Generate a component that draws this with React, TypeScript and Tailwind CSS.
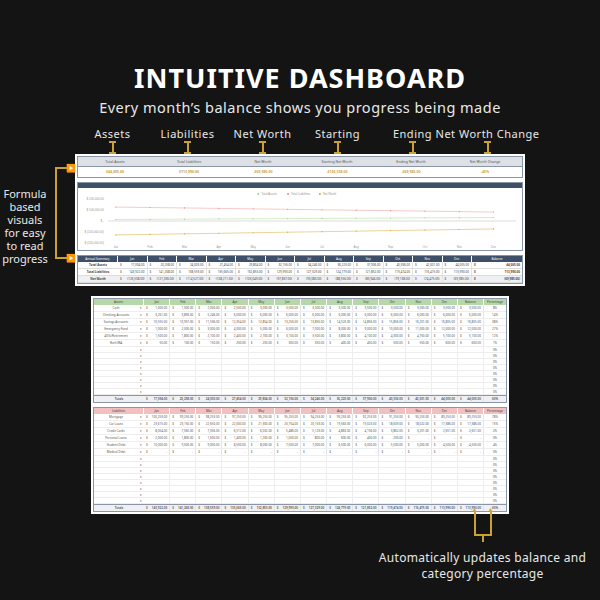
import React from 'react'

const months = ['Jan', 'Feb', 'Mar', 'Apr', 'May', 'Jun', 'Jul', 'Aug', 'Sep', 'Oct', 'Nov', 'Dec']

const assets: [string, string[], string, string][] = [
  ['Cash', ['1,000.00', '1,500.00', '2,000.00', '2,500.00', '3,000.00', '3,500.00', '3,500.00', '3,500.00', '3,500.00', '3,500.00', '3,500.00', '3,500.00'], '3,500.00', '8%'],
  ['Checking Accounts', ['3,261.00', '3,893.00', '5,246.00', '6,000.00', '6,000.00', '6,000.00', '6,000.00', '6,000.00', '6,000.00', '6,000.00', '6,000.00', '6,000.00'], '6,000.00', '14%'],
  ['Savings Accounts', ['10,555.00', '10,957.00', '11,536.00', '12,354.00', '12,854.00', '13,256.00', '13,856.00', '14,523.00', '14,856.00', '15,856.00', '16,201.00', '16,805.00'], '16,805.00', '38%'],
  ['Emergency Fund', ['1,000.00', '2,000.00', '3,000.00', '4,000.00', '5,000.00', '6,000.00', '7,000.00', '8,000.00', '9,000.00', '10,000.00', '11,000.00', '12,000.00'], '12,000.00', '27%'],
  ['401k/Retirement', ['1,500.00', '1,800.00', '2,100.00', '2,400.00', '2,700.00', '3,100.00', '3,500.00', '3,800.00', '4,100.00', '4,300.00', '4,750.00', '5,100.00'], '5,100.00', '12%'],
  ['Roth IRA', ['50.00', '100.00', '150.00', '200.00', '250.00', '300.00', '350.00', '400.00', '450.00', '500.00', '550.00', '600.00'], '600.00', '1%'],
]
const assetTotals = ['17,094.00', '20,258.00', '24,003.00', '27,454.00', '29,804.00', '32,156.00', '34,246.00', '36,223.00', '37,906.00', '40,336.00', '42,001.00', '44,005.00']

const liabilities: [string, string[], string, string][] = [
  ['Mortgage', ['100,253.00', '99,253.00', '98,253.00', '97,253.00', '96,253.00', '95,253.00', '94,253.00', '93,253.00', '92,253.00', '91,253.00', '90,253.00', '89,253.00'], '89,253.00', '78%'],
  ['Car Loans', ['23,615.00', '23,150.00', '22,650.00', '22,000.00', '21,300.00', '20,754.00', '20,153.00', '19,563.00', '19,023.00', '18,609.00', '18,022.00', '17,386.00'], '17,386.00', '15%'],
  ['Credit Cards', ['8,054.00', '7,565.00', '7,056.00', '6,512.00', '6,032.00', '5,486.00', '5,123.00', '4,863.00', '4,156.00', '3,862.00', '3,201.00', '2,651.00'], '2,651.00', '2%'],
  ['Personal Loans', ['2,000.00', '1,800.00', '1,600.00', '1,400.00', '1,200.00', '1,000.00', '800.00', '600.00', '400.00', '200.00', '-', '-'], '-', '0%'],
  ['Student Debt', ['10,000.00', '9,500.00', '9,000.00', '8,500.00', '8,000.00', '7,500.00', '7,000.00', '6,500.00', '6,000.00', '5,500.00', '5,000.00', '4,500.00'], '4,500.00', '4%'],
  ['Medical Debt', ['-', '-', '-', '-', '-', '-', '-', '-', '-', '-', '-', '-'], '-', '0%'],
]
const liabTotals = ['143,922.00', '141,268.00', '138,559.00', '135,665.00', '132,853.00', '129,993.00', '127,329.00', '124,779.00', '121,852.00', '119,474.00', '116,475.00', '113,990.00']

const summaryRows: [string, string[], string][] = [
  ['Total Assets', assetTotals, '44,005.00'],
  ['Total Liabilities', liabTotals, '113,990.00'],
  ['Net Worth', ['(126,538.00)', '(121,036.00)', '(114,527.00)', '(108,211.00)', '(103,049.00)', '(97,837.00)', '(93,083.00)', '(88,556.00)', '(83,946.00)', '(79,138.00)', '(74,475.00)', '(69,985.00)'], '(69,985.00)'],
]

const tableCols = 'grid grid-cols-[44px_6px_repeat(12,1fr)_26px_22px]'
const summaryCols = 'grid grid-cols-[40px_repeat(12,1fr)_50px]'

function Money({ v }: { v: string }) {
  return (
    <div className="flex justify-between px-[2px] border-r border-[#e3e3e3]">
      <span>$</span>
      <span>{v}</span>
    </div>
  )
}

function Table({ title, head, rows, totals, totalBal }: { title: string; head: string; rows: [string, string[], string, string][]; totals: string[]; totalBal: string }) {
  const blanks = Array.from({ length: 8 })
  return (
    <div className="border border-[#8a96a8] text-[3px] leading-[6px] text-[#555]">
      <div className={`${tableCols} ${head} text-center text-[#444]`}>
        <div className="col-span-2 border-r border-white">{title}</div>
        {months.map(m => <div key={m} className="border-r border-white">{m}</div>)}
        <div className="border-r border-white">Balance</div>
        <div>Percentage</div>
      </div>
      {rows.map(([name, vals, bal, pct]) => (
        <div key={name} className={`${tableCols} border-b border-[#eee]`}>
          <div className="text-center">{name}</div>
          <div className="text-center">▾</div>
          {vals.map((v, i) => <Money key={i} v={v} />)}
          <Money v={bal} />
          <div className="text-center">{pct}</div>
        </div>
      ))}
      {blanks.map((_, i) => (
        <div key={i} className={`${tableCols} h-[6px] border-b border-[#eee]`}>
          <div />
          <div className="text-center">▾</div>
          {months.map(m => <div key={m} className="border-r border-[#eee]" />)}
          <div className="border-r border-[#eee]" />
          <div className="text-center">0%</div>
        </div>
      ))}
      <div className={`${tableCols} bg-[#eef0f3] border-t border-[#8a96a8] font-semibold`}>
        <div className="col-span-2 text-center">Totals</div>
        {totals.map((v, i) => <Money key={i} v={v} />)}
        <Money v={totalBal} />
        <div className="text-center">60%</div>
      </div>
    </div>
  )
}

function Chart() {
  const xs = months.map((_, i) => 38 + i * 34.5)
  const line = (a: number, b: number) => xs.map((x, i) => `${x},${a + ((b - a) * i) / 11}`).join(' ')
  return (
    <svg viewBox="0 0 446 62" className="w-full h-[62px]">
      <g fontSize="3" fill="#999" fontFamily="Liberation Sans">
        <circle cx="181" cy="6" r="1" fill="#9fcf7f" /><text x="184" y="7">Total Assets</text>
        <circle cx="211" cy="6" r="1" fill="#e58a8a" /><text x="214" y="7">Total Liabilities</text>
        <circle cx="243" cy="6" r="1" fill="#d4a733" /><text x="246" y="7">Net Worth</text>
        {['$ 200,000.00', '$ 100,000.00', '$ -', '$ (100,000.00)', '$ (200,000.00)'].map((t, i) => (
          <text key={t} x="26" y={12 + i * 11} textAnchor="end">{t}</text>
        ))}
        {months.map((m, i) => <text key={m} x={xs[i]} y="60" textAnchor="middle">{m}</text>)}
      </g>
      <line x1="30" x2="440" y1="33" y2="33" stroke="#bbb" strokeWidth="0.5" />
      <polyline points={line(19, 24)} fill="none" stroke="#f1a5a5" strokeWidth="0.6" />
      <polyline points={line(31.5, 29.5)} fill="none" stroke="#b9df9f" strokeWidth="0.6" />
      <polyline points={line(47, 41)} fill="none" stroke="#deb455" strokeWidth="0.6" />
      {xs.map((x, i) => (
        <g key={i}>
          <circle cx={x} cy={19 + (5 * i) / 11} r="0.6" fill="#e58a8a" />
          <circle cx={x} cy={31.5 - (2 * i) / 11} r="0.6" fill="#9fcf7f" />
          <circle cx={x} cy={47 - (6 * i) / 11} r="0.6" fill="#d4a733" />
        </g>
      ))}
    </svg>
  )
}

const Tick = () => (
  <div className="flex flex-col items-center">
    <div className="w-[7px] h-[2px] bg-[#c9a232]" />
    <div className="w-[2px] h-[9px] bg-[#c9a232]" />
    <div className="w-[7px] h-[2px] bg-[#c9a232]" />
  </div>
)

export default function App() {
  const labels = ['Assets', 'Liabilities', 'Net Worth', 'Starting', 'Ending', 'Net Worth Change']
  const tops = [['Total Assets', '$44,005.00'], ['Total Liabilities', '$113,990.00'], ['Net Worth', '-$69,985.00'], ['Starting Net Worth', '-$126,538.00'], ['Ending Net Worth', '-$69,985.00'], ['Net Worth Change', '-45%']]
  return (
    <div className="w-[600px] h-[600px] bg-[#141414] overflow-hidden relative font-['Liberation_Serif',serif] text-[#e8e8e8]">
      <h1 className="text-center text-white text-[27px] font-bold tracking-[1px] pt-[62px] leading-[32px]">INTUITIVE DASHBOARD</h1>
      <p className="text-center text-[14.5px] mt-[3px] tracking-[0.5px]">Every month’s balance shows you progress being made</p>

      <div className="mx-[75px] grid grid-cols-6 mt-[8px] text-[11px] tracking-[0.5px] text-center">
        {labels.map(l => (
          <div key={l} className="flex flex-col items-center whitespace-nowrap">
            <span className="leading-[14px]">{l}</span>
            <Tick />
          </div>
        ))}
      </div>

      <div className="mx-[75px] bg-white p-[2px] font-['Liberation_Sans',sans-serif]">
        <div className="border border-[#8a96a8]">
          <div className="grid grid-cols-6 bg-[#dde1e6] text-[3.5px] leading-[9px] text-[#555] text-center border-b border-[#8a96a8]">
            {tops.map(([t]) => <div key={t}>{t}</div>)}
          </div>
          <div className="grid grid-cols-6 text-[3.5px] leading-[10px] text-[#c9a24a] font-bold text-center">
            {tops.map(([t, v]) => <div key={t}>{v}</div>)}
          </div>
        </div>
        <div className="mt-[4px] border border-[#8a96a8]">
          <div className="h-[5px] bg-[#3e5069]" />
          <Chart />
        </div>
        <div className="mt-[4px] border border-[#8a96a8] text-[3px] leading-[6px] text-[#444]">
          <div className={`${summaryCols} bg-[#3e5069] text-white text-center`}>
            <div className="border-r border-white">Annual Summary</div>
            {months.map(m => <div key={m} className="border-r border-white">{m}</div>)}
            <div>Balance</div>
          </div>
          {summaryRows.map(([name, vals, bal]) => (
            <div key={name} className={`${summaryCols} border-b border-[#ddd] ${name === 'Net Worth' ? 'bg-[#eef0f3]' : ''}`}>
              <div className="text-center font-bold">{name}</div>
              {vals.map((v, i) => <Money key={i} v={v} />)}
              <div className="flex justify-between px-[2px] font-bold"><span>$</span><span>{bal}</span></div>
            </div>
          ))}
        </div>
      </div>

      <div className="mx-[91px] mt-[10px] bg-white p-[2px] font-['Liberation_Sans',sans-serif] flex flex-col gap-[4px]">
        <Table title="Assets" head="bg-[#b6d7a8]" rows={assets} totals={assetTotals} totalBal="44,005.00" />
        <Table title="Liabilities" head="bg-[#f1c0c0]" rows={liabilities} totals={liabTotals} totalBal="113,990.00" />
      </div>

      {/* left callout */}
      <div className="absolute left-0 top-[187px] w-[50px] text-center text-[11px] leading-[13px] text-[#e8e8e8]">
        Formula based visuals for easy to read progress
      </div>
      <div className="absolute left-[55px] top-[168px] w-[2px] h-[90px] bg-[#c9a232]" />
      <div className="absolute left-[55px] top-[167px] w-[15px] h-[2px] bg-[#c9a232]" />
      <div className="absolute left-[66px] top-[164px] text-[#c9a232] text-[8px] leading-[8px]">▶</div>
      <div className="absolute left-[55px] top-[257px] w-[15px] h-[2px] bg-[#c9a232]" />
      <div className="absolute left-[66px] top-[254px] text-[#c9a232] text-[8px] leading-[8px]">▶</div>

      {/* bottom callout */}
      <div className="absolute left-[471px] top-[506px] text-[#c9a232] text-[7px] leading-[7px]">▲</div>
      <div className="absolute left-[487px] top-[506px] text-[#c9a232] text-[7px] leading-[7px]">▲</div>
      <div className="absolute left-[474px] top-[511px] w-[2px] h-[24px] bg-[#c9a232]" />
      <div className="absolute left-[490px] top-[511px] w-[2px] h-[24px] bg-[#c9a232]" />
      <div className="absolute left-[474px] top-[534px] w-[18px] h-[2px] bg-[#c9a232]" />
      <div className="absolute left-[482px] top-[534px] w-[2px] h-[8px] bg-[#c9a232]" />
      <div className="absolute left-[370px] top-[550px] w-[225px] text-center text-[12px] leading-[16px] tracking-[0.3px]">
        Automatically updates balance and category percentage
      </div>
    </div>
  )
}
